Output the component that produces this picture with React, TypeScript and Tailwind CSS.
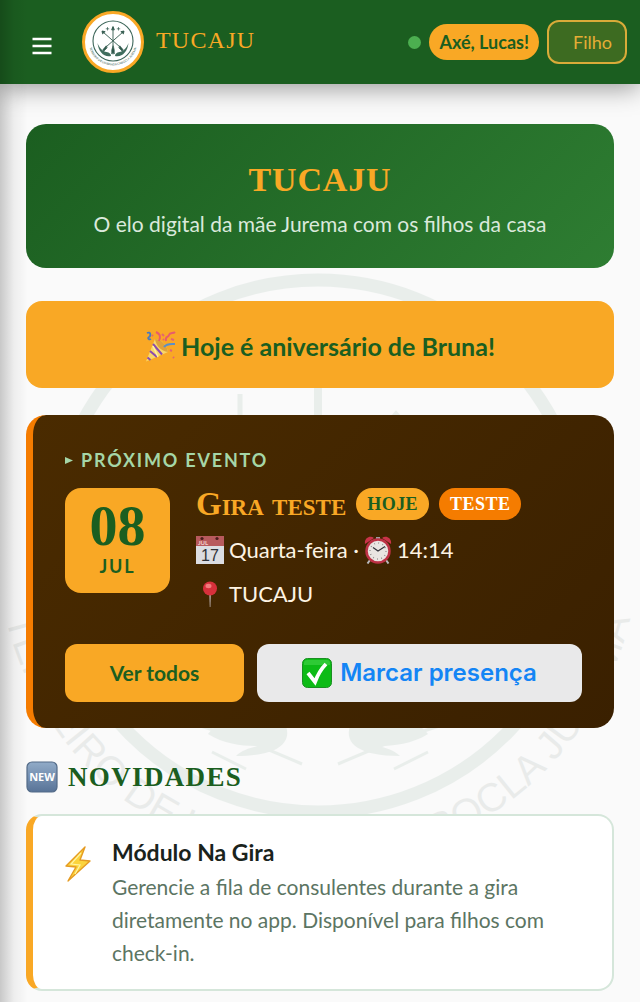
import type { ReactNode } from "react";

const serif = "font-['Liberation_Serif',serif]";

function MenuIcon() {
  return (
    <svg viewBox="0 0 24 24" className="size-6" stroke="currentColor" strokeWidth="2.600" aria-hidden="true">
      <path d="M2.500 5h19M2.500 12h19M2.500 19h19" />
    </svg>
  );
}

function Crest({ className }: { className?: string }) {
  return (
    <svg viewBox="4 4 56 56" className={className} fill="none" aria-hidden="true">
      <circle cx="32" cy="31" r="20" stroke="#3c6659" strokeWidth="1.1" />
      <g stroke="#31594d" strokeWidth="0.9" strokeLinecap="round">
        <path d="M32 18v26M22 22l17 15M42 22L25 37" />
        <path d="M30.800 19.500L32 16.500l1.200 3zM21.500 23.500l-.5-2.500 2.800.6zM42.500 23.500l.5-2.500-2.800.6z" fill="#31594d" />
        <path d="M32 36l-1.300 4v4l1.300-1.500 1.300 1.500v-4zM25 36l-3 3.500.5 2 3.500-3.500zM39 36l3 3.500-.5 2-3.500-3.500z" fill="#31594d" strokeWidth="0.6" />
        <path d="M26.500 17.500v2.600M25.200 18.800h2.600M37.500 17.500v2.600M36.200 18.800h2.600" strokeWidth="0.7" />
      </g>
      <g fill="#3f6d5d">
        <path d="M16.500 33c2 6 6 8.500 9 9s4.500 2 4.500 4c-7 1.500-12.500-4-13.500-13z" />
        <path d="M47.500 33c-2 6-6 8.500-9 9s-4.500 2-4.500 4c7 1.500 12.500-4 13.500-13z" />
      </g>
      <path id="crest-arc" d="M7.500 31a24.500 24.500 0 0 0 49 0" />
      <text fill="#31594d" fontSize="3" fontFamily="Lato, sans-serif" textAnchor="middle">
        <textPath href="#crest-arc" startOffset="50%">TERREIRO DE UMBANDA CABOCLA JUREMA</textPath>
      </text>
    </svg>
  );
}

function Watermark() {
  return (
    <div className="pointer-events-none absolute inset-0 flex items-center justify-center overflow-hidden" aria-hidden="true">
      <svg viewBox="0 0 680 680" className="w-[680px] shrink-0 opacity-[0.07]" fill="none">
        <circle cx="338" cy="342" r="266" stroke="#1b5e3a" strokeWidth="13" />
        <g stroke="#1b5e3a" strokeWidth="8">
          <path d="M338 170v330M192 242l260 200M484 242L224 442" />
          <path d="M260 190v32M404 224l12-14 12 14" strokeWidth="5" />
          <path d="M190 512l80 26 52 22M490 512l-80 26-52 22M232 548l34 17M448 548l-34 17" strokeWidth="3" />
        </g>
        <g fill="#1b5e3a">
          <path d="M228 530c12-18 50-20 78-8 6 18-10 30-50 30 6-6 14-8 22-10-16 0-34-2-50-12z" />
          <path d="M448 530c-12-18-50-20-78-8-6 18 10 30 50 30-6-6-14-8-22-10 16 0 34-2 50-12z" />
        </g>
        <path id="ring-arc" d="M17 340a321 321 0 0 0 642 0" />
        <text fill="#1b3a2e" fontSize="40" fontFamily="'Liberation Sans', Arial, sans-serif" textAnchor="middle">
          <textPath href="#ring-arc" startOffset="50%">TERREIRO DE UMBANDA CABOCLA JUREMA</textPath>
        </text>
      </svg>
    </div>
  );
}

function PartyIcon() {
  return (
    <svg viewBox="0 0 32 32" className="size-8 shrink-0" fill="none" aria-hidden="true">
      <path d="M10 8L1 30.500 23 21C22 14 16 8 10 8z" fill="#f9d768" />
      <path d="M10 8c6 0 12 6 13 13-7-1-12-6-13-13z" fill="#e0a23a" />
      <path d="M8 13l9 10.500M5 20l7 6M2.500 26.500l3 2.500" stroke="#8a4bb0" strokeWidth="2" />
      <path d="M8 15l5 11" stroke="#fff0a0" strokeWidth="1.500" />
      <path d="M2 2c4-2 4 3 2 4s0 3 2 2" stroke="#4a79bd" strokeWidth="1.800" />
      <path d="M11 1c4 2 5 4 3 9M21 10c-1-5 2-3 3-6s4-1 6-3" stroke="#e85c6a" strokeWidth="2" />
      <path d="M19 16c3-4 8-3 11-3" stroke="#5a8fc9" strokeWidth="2" />
      <path d="M17 3l2 2M26 8l3 1M7 4l1 1M25 19l2 1M28 26l1 1M18 8l1 1" stroke="#e46570" strokeWidth="2" />
    </svg>
  );
}

function CalendarIcon() {
  return (
    <svg viewBox="0 0 28 28" className="size-7 shrink-0" aria-hidden="true">
      <path d="M0 0h28v28H0z" fill="#dcdde2" />
      <path d="M0 0h28v10H0z" fill="#b85a5d" />
      <circle cx="6" cy="2.500" r="1.600" fill="#4b1c1c" />
      <circle cx="21" cy="2.500" r="1.600" fill="#4b1c1c" />
      <text x="2" y="9" fontSize="6" fontWeight="700" fill="#f3cdca" fontFamily="Lato, sans-serif">JUL</text>
      <text x="14" y="25" fontSize="16" textAnchor="middle" fill="#303238" fontFamily="'Liberation Sans', sans-serif">17</text>
    </svg>
  );
}

function ClockIcon() {
  return (
    <svg viewBox="0 0 28 28" className="size-7 shrink-0" fill="none" aria-hidden="true">
      <path d="M6 24l-2.500 3.500M22 24l2.500 3.500" stroke="#b9babd" strokeWidth="2" />
      <path d="M1 8C0 2 6-1 10 2zM27 8c1-6-5-9-9-6z" fill="#c93349" />
      <path d="M12 1h4v3h-4z" fill="#9e9ea2" />
      <circle cx="14" cy="15" r="11.500" fill="#e9e5e2" stroke="#bd3145" strokeWidth="2.500" />
      <circle cx="14" cy="15" r="8" stroke="#8c8888" strokeWidth="1.500" strokeDasharray="0.8 3.400" />
      <path d="M9 11.500l5 3.500 7-4.500" stroke="#33343b" strokeWidth="1.200" />
    </svg>
  );
}

function PinIcon() {
  return (
    <svg viewBox="0 0 28 28" className="size-7 shrink-0" aria-hidden="true">
      <path d="M13.200 14h1.800l-.5 13h-.8z" fill="#a99b94" />
      <circle cx="14" cy="8.500" r="7" fill="#d7303b" />
      <ellipse cx="12.500" cy="6" rx="3" ry="2.200" fill="#f27c7d" />
    </svg>
  );
}

function CheckIcon() {
  return (
    <svg viewBox="0 0 30 30" className="size-[30px] shrink-0" fill="none" aria-hidden="true">
      <rect x="0.500" y="0.500" width="29" height="29" rx="5" fill="#0dbb16" stroke="#1a8f22" />
      <path d="M2 5c0-2 1-3 3-3h20c2 0 3 1 3 3v2H2z" fill="#45d34b" opacity="0.600" />
      <path d="M6 15l7 9C16 16 19 11 24 6" stroke="#fff" strokeWidth="3.800" />
    </svg>
  );
}

function NewIcon() {
  return (
    <svg viewBox="0 0 32 32" className="size-8 shrink-0" aria-hidden="true">
      <defs>
        <linearGradient id="new-fill" x1="0" y1="0" x2="0" y2="1">
          <stop stopColor="#91abc8" />
          <stop offset="1" stopColor="#587397" />
        </linearGradient>
      </defs>
      <rect x="1" y="1" width="30" height="30" rx="5" fill="url(#new-fill)" stroke="#536b88" strokeWidth="1.200" />
      <text x="16" y="20" fontSize="11" fontWeight="700" letterSpacing="0" textAnchor="middle" fill="#fff" fontFamily="'Noto Sans', sans-serif">NEW</text>
    </svg>
  );
}

function BoltIcon() {
  return (
    <svg viewBox="0 0 26 36" className="h-9 w-[26px] shrink-0" aria-hidden="true">
      <path d="M20 1L1 20l10 1-8 14 22-20-10-1z" fill="#fbd43c" stroke="#e59b22" strokeWidth="1.400" strokeLinejoin="round" />
      <path d="M16 7L6 18l9 1-5 9" fill="none" stroke="#fff3a4" strokeWidth="1.200" />
    </svg>
  );
}

function Badge({ children, className }: { children: ReactNode; className: string }) {
  return (
    <span className={`flex h-8 items-center rounded-full px-[11px] text-lg font-bold tracking-wide ${serif} ${className}`}>
      {children}
    </span>
  );
}

export default function App() {
  return (
    <div className="relative flex min-h-screen flex-col bg-[#fafafa] font-['Lato',sans-serif]">
      <header className="relative z-10 flex h-[84px] items-center bg-[#1b5e20] pr-[13px] pl-[30px] shadow-[0_4px_24px_rgba(0,0,0,0.4)]">
        <button type="button" aria-label="Abrir menu" className="mt-2 text-white">
          <MenuIcon />
        </button>
        <div className="ml-7 size-[62px] shrink-0 rounded-full border-3 border-[#f9a825] bg-white">
          <Crest className="size-full" />
        </div>
        <span className={`mb-1 ml-3 text-2xl font-medium tracking-wider text-[#f9a825] ${serif}`}>TUCAJU</span>
        <div className="ml-auto flex items-center gap-2">
          <span className="size-[13px] rounded-full bg-[#4caf50]" />
          <span className="flex h-9 items-center rounded-full bg-[#f9a825] px-[10px] text-lg font-bold whitespace-nowrap text-[#1b5e20]">
            Axé, Lucas!
          </span>
          <button type="button" className="h-11 rounded-xl border-2 border-[#d9ab39] bg-[#3d6b21] pr-[13px] pl-6 text-lg text-[#e5ad35]">
            Filho
          </button>
        </div>
      </header>

      <main className="relative flex-1 px-[26px] pt-10 pb-3">
        <Watermark />
        <div className="relative">
          <section className="flex h-36 flex-col items-center justify-center rounded-[20px] bg-linear-135 from-[#1b5e20] to-[#2e7d32] text-center">
            <h1 className={`mt-2 text-[34px] leading-10 font-bold tracking-wide text-[#f9a825] ${serif}`}>TUCAJU</h1>
            <p className="mt-2 text-[21px] leading-8 text-[#dbe9dc]">O elo digital da mãe Jurema com os filhos da casa</p>
          </section>

          <section className="mt-[33px] flex h-[87px] items-center justify-center gap-1 rounded-2xl bg-[#f9a825] pt-1">
            <PartyIcon />
            <p className="text-[25px] font-bold text-[#1b5e20]">Hoje é aniversário de Bruna!</p>
          </section>

          <section className="mt-[27px] rounded-[20px] border-l-[7px] border-[#f57c00] bg-linear-135 from-[#4a2b00] to-[#3a2000] px-8 pt-8 pb-[26px]">
            <h2 className="flex h-[26px] items-center gap-2 text-lg font-bold tracking-widest text-[#a5d6a7]">
              <svg viewBox="0 0 8 8" className="size-2" fill="currentColor" aria-hidden="true">
                <path d="M0 1l8 3.500-8 3.500z" />
              </svg>
              PRÓXIMO EVENTO
            </h2>
            <div className="mt-[15px] flex gap-[26px]">
              <div className="flex size-[105px] shrink-0 flex-col items-center rounded-2xl bg-[#f9a825] pt-3 text-[#1b5e20]">
                <span className={`text-[56px] leading-[52px] font-bold ${serif}`}>08</span>
                <span className="text-lg font-bold tracking-widest">JUL</span>
              </div>
              <div className="text-[22px] leading-[44px] text-[#fdf3e3]">
                <div className="flex h-8 items-center gap-[10px]">
                  <h3 className={`text-[33px] font-bold text-[#f9a825] [font-variant-caps:small-caps] ${serif}`}>Gira teste</h3>
                  <Badge className="bg-[#f9a825] text-[#1b5e20]">HOJE</Badge>
                  <Badge className="bg-[#f57c00] text-white">TESTE</Badge>
                </div>
                <p className="mt-2 flex items-center gap-[5px]">
                  <CalendarIcon />
                  <span>Quarta-feira ·</span>
                  <ClockIcon />
                  <span>14:14</span>
                </p>
                <p className="flex items-center gap-[5px]">
                  <PinIcon />
                  <span>TUCAJU</span>
                </p>
              </div>
            </div>
            <div className="mt-7 flex gap-[13px]">
              <button type="button" className="h-[58px] w-[179px] shrink-0 rounded-xl bg-[#f9a825] text-[21px] font-bold text-[#1b5e20]">
                Ver todos
              </button>
              <button
                type="button"
                className="flex h-[58px] flex-1 items-center justify-center gap-2 rounded-xl bg-[#e9e9ea] font-['Inter',sans-serif] text-2xl font-semibold text-[#1485f5]"
              >
                <CheckIcon />
                Marcar presença
              </button>
            </div>
          </section>

          <section>
            <h2 className={`mt-[33px] flex h-8 items-center gap-[10px] text-[27px] font-bold tracking-wider text-[#1b5e20] ${serif}`}>
              <NewIcon />
              NOVIDADES
            </h2>
            <article className="mt-[21px] flex gap-[21px] rounded-2xl border-2 border-l-[7px] border-[#d5e6da] border-l-[#f9a825] bg-white pt-[18px] pr-8 pb-5 pl-8">
              <div className="pt-3">
                <BoltIcon />
              </div>
              <div>
                <h3 className="text-[23px] leading-9 font-bold text-[#1a231c]">Módulo Na Gira</h3>
                <p className="text-[21px] leading-[33px] text-[#5c7563]">
                  Gerencie a fila de consulentes durante a gira diretamente no app. Disponível para filhos com check-in.
                </p>
              </div>
            </article>
          </section>
        </div>
      </main>

      <div className="pointer-events-none absolute inset-y-0 left-0 z-20 w-7 bg-linear-to-r from-black/20 via-black/5 to-transparent" />
    </div>
  );
}
